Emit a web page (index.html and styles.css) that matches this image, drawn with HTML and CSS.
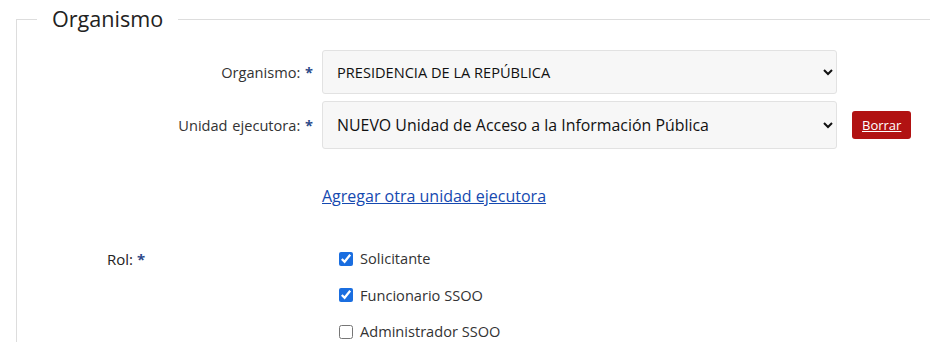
FILE: index.html
```html
<!DOCTYPE html>
<html lang="es">
<head>
    <meta charset="UTF-8">
    <title>Organismo</title>
    <link rel="stylesheet" href="styles.css">
</head>
<body>

    <fieldset class="grupo">
        <legend>Organismo</legend>

        <div class="fila">
            <label class="etiqueta" for="organismo">Organismo: <span class="req">*</span></label>
            <select id="organismo" class="campo campo-chico">
                <option>PRESIDENCIA DE LA REPÚBLICA</option>
            </select>
        </div>

        <div class="fila">
            <label class="etiqueta" for="unidad">Unidad ejecutora: <span class="req">*</span></label>
            <select id="unidad" class="campo">
                <option>NUEVO Unidad de Acceso a la Información Pública</option>
            </select>
            <button class="btn-borrar">Borrar</button>
        </div>

        <div class="fila-link">
            <a href="#">Agregar otra unidad ejecutora</a>
        </div>

        <div class="fila-rol">
            <label class="etiqueta-rol">Rol: <span class="req">*</span></label>
            <div class="opciones">
                <label class="opcion"><input type="checkbox" checked> Solicitante</label>
                <label class="opcion"><input type="checkbox" checked> Funcionario SSOO</label>
                <label class="opcion"><input type="checkbox"> Administrador SSOO</label>
            </div>
        </div>
    </fieldset>

</body>
</html>
```

FILE: styles.css
```css
body {
    margin: 0;
    font-family: 'Open Sans', sans-serif;
    color: #333;
    background: white;
    overflow: hidden;
}

.grupo {
    margin: 8px -20px 0 16px;
    padding: 0;
    border: 1px solid #ddd;
    border-bottom: none;
    min-width: 0;
}

.grupo legend {
    margin-left: 20px;
    padding: 0 15px;
    font-size: 21.6px;
    color: #222;
    line-height: 22px;
}

.fila {
    display: flex;
    align-items: center;
    margin-top: 7px;
}

.fila:first-of-type {
    margin-top: 20px;
}

.etiqueta {
    width: 296px;
    text-align: right;
    font-size: 14.6px;
    padding-right: 9px;
    word-spacing: 1px;
}

.req {
    color: #2e4a8a;
    font-weight: bold;
}

.campo {
    width: 515px;
    height: 48px;
    padding: 0 10px;
    font-family: 'Open Sans', sans-serif;
    font-size: 15.9px;
    color: #111;
    background: #f7f7f7;
    border: 1px solid #e2e2e2;
    border-radius: 3px;
}

.campo-chico {
    height: 44px;
    font-size: 14.6px;
}

.btn-borrar {
    margin-left: 15px;
    height: 28px;
    padding: 0 10px;
    font-family: 'Open Sans', sans-serif;
    font-size: 13px;
    color: white;
    text-decoration: underline;
    background: #b11212;
    border: none;
    border-radius: 3px;
}

.fila-link {
    padding-left: 305px;
    margin-top: 36px;
    font-size: 16px;
}

.fila-link a {
    color: #1549b0;
}

.fila-rol {
    display: flex;
    margin-top: 40px;
}

.etiqueta-rol {
    width: 232px;
    padding-left: 90px;
    font-size: 15px;
    color: #222;
    padding-top: 2px;
}

.opciones {
    display: flex;
    flex-direction: column;
    gap: 15.5px;
    padding-top: 1px;
}

.opcion {
    font-size: 14.6px;
    display: flex;
    align-items: center;
    gap: 7px;
    line-height: 21px;
}

.opcion input {
    margin: 0;
    width: 14px;
    height: 14px;
    accent-color: #1a6ee0;
}
```
